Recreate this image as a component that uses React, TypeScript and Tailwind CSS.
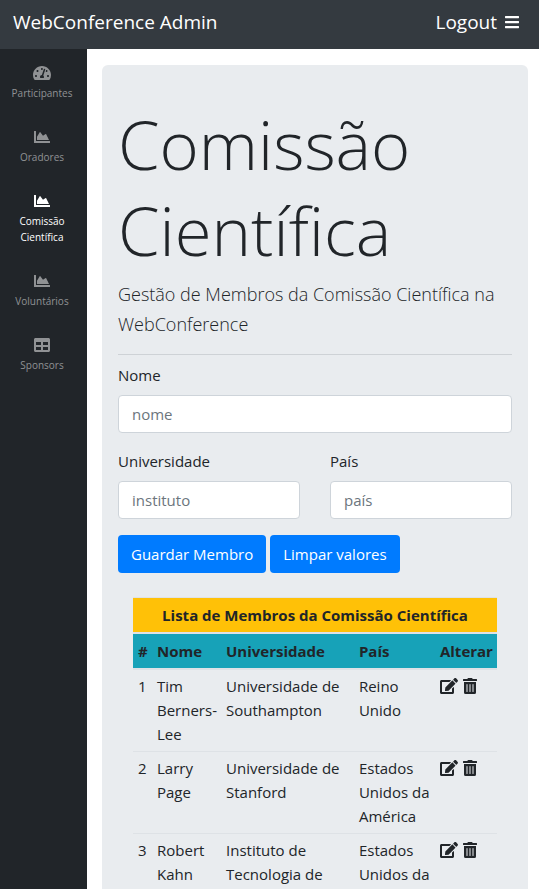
import type { ReactNode } from 'react';
import { FaBars, FaChartArea, FaEdit, FaTable, FaTachometerAlt, FaTrashAlt } from 'react-icons/fa';

const navItems: { label: string; icon: ReactNode; active?: boolean }[] = [
  { label: 'Participantes', icon: <FaTachometerAlt className="h-4 w-[18px]" /> },
  { label: 'Oradores', icon: <FaChartArea className="size-4" /> },
  { label: 'Comissão Científica', icon: <FaChartArea className="size-4" />, active: true },
  { label: 'Voluntários', icon: <FaChartArea className="size-4" /> },
  { label: 'Sponsors', icon: <FaTable className="size-4" /> },
];

const members = [
  { name: 'Tim Berners-Lee', university: 'Universidade de Southampton', country: 'Reino Unido' },
  { name: 'Larry Page', university: 'Universidade de Stanford', country: 'Estados Unidos da América' },
  { name: 'Robert Kahn', university: 'Instituto de Tecnologia de', country: 'Estados Unidos da América' },
];

function Field({ id, label, placeholder }: { id: string; label: string; placeholder: string }) {
  return (
    <div className="min-w-0 flex-1">
      <label htmlFor={id} className="mb-2 block">{label}</label>
      <input
        id={id}
        type="text"
        placeholder={placeholder}
        className="h-[38px] w-full rounded border border-[#ced4da] bg-white px-[13px] placeholder:text-[#6c757d]"
      />
    </div>
  );
}

export default function App() {
  return (
    <div className="flex min-h-screen flex-col bg-white font-['Segoe_UI','Open_Sans',sans-serif] text-[15px] leading-6 text-[#212529]">
      <header className="flex h-[49px] shrink-0 items-center justify-between bg-[#343a40] pb-[6px] pl-[13px] pr-5 text-[19px] text-white">
        <a href="#inicio">WebConference Admin</a>
        <a href="#logout" className="flex items-center gap-2">
          Logout
          <FaBars className="h-4 w-[14px]" />
        </a>
      </header>
      <div className="flex flex-1">
        <nav className="w-[87px] shrink-0 bg-[#212529] pr-[3px] pt-[2px] text-[10px] leading-4">
          <ul>
            {navItems.map((item) => (
              <li key={item.label}>
                <a
                  href="#"
                  className={`flex flex-col items-center gap-1 px-3 py-[14px] text-center ${item.active ? 'text-white' : 'text-[#909294]'}`}
                >
                  {item.icon}
                  <span>{item.label}</span>
                </a>
              </li>
            ))}
          </ul>
        </nav>
        <main className="min-w-0 flex-1 pl-[15px] pr-[11px] pt-4">
          <section className="rounded-md bg-[#e9ecef] px-4 pb-8 pt-9">
            <h1 className="mb-[6px] text-[67px] font-light leading-[86px]">Comissão Científica</h1>
            <p className="text-[18px] font-light leading-[30px]">
              Gestão de Membros da Comissão Científica na WebConference
            </p>
            <hr className="mb-2 mt-[15px] border-[#ced2d6]" />
            <form className="flex flex-col gap-4">
              <Field id="nome" label="Nome" placeholder="nome" />
              <div className="flex gap-[30px]">
                <Field id="universidade" label="Universidade" placeholder="instituto" />
                <Field id="pais" label="País" placeholder="país" />
              </div>
              <div className="flex gap-1 text-white">
                <button type="button" className="h-[38px] rounded bg-[#007bff] px-[13px]">Guardar Membro</button>
                <button type="reset" className="h-[38px] rounded bg-[#007bff] px-[13px]">Limpar valores</button>
              </div>
            </form>
            <div className="px-[15px] pt-6">
              <table className="w-full table-fixed border-collapse text-left [&_td]:border-t [&_td]:border-[#dee2e6] [&_td]:px-[5px] [&_td]:pb-[5px] [&_td]:pt-1 [&_td]:align-top [&_th]:border-b-2 [&_th]:border-[#dee2e6] [&_th]:p-[5px]">
                <colgroup>
                  <col className="w-[19px]" />
                  <col className="w-[69px]" />
                  <col />
                  <col className="w-[81px]" />
                  <col className="w-[62px]" />
                </colgroup>
                <thead>
                  <tr className="border-t border-[#dee2e6] bg-[#ffc107] text-center">
                    <th colSpan={5}>Lista de Membros da Comissão Científica</th>
                  </tr>
                  <tr className="bg-[#17a2b8]">
                    <th>#</th>
                    <th>Nome</th>
                    <th>Universidade</th>
                    <th>País</th>
                    <th>Alterar</th>
                  </tr>
                </thead>
                <tbody>
                  {members.map((member, i) => (
                    <tr key={member.name}>
                      <td>{i + 1}</td>
                      <td>{member.name}</td>
                      <td>{member.university}</td>
                      <td>{member.country}</td>
                      <td>
                        <div className="flex h-6 items-center gap-[5px]">
                          <button type="button" aria-label="Editar"><FaEdit className="h-4 w-[18px]" /></button>
                          <button type="button" aria-label="Remover"><FaTrashAlt className="h-4 w-[14px]" /></button>
                        </div>
                      </td>
                    </tr>
                  ))}
                </tbody>
              </table>
            </div>
          </section>
        </main>
      </div>
    </div>
  );
}
